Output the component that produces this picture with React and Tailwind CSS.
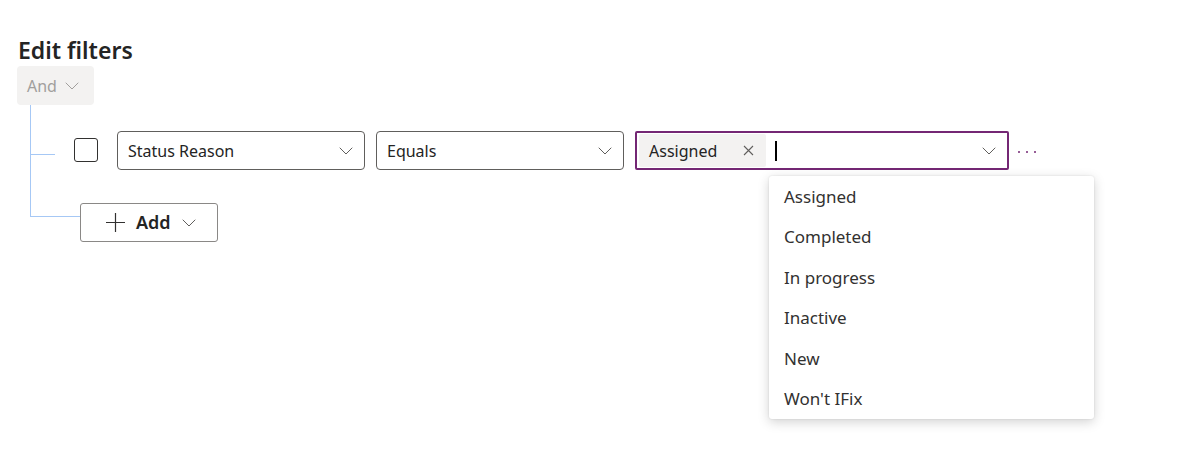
import React from "react";

const Chevron = ({ className = "" }) => (
  <svg width="14" height="8" viewBox="0 0 14 8" className={className}>
    <path d="M1 1l6 6 6-6" stroke="currentColor" strokeWidth="1" fill="none" strokeLinecap="round" strokeLinejoin="round" />
  </svg>
);

const Select = ({ label }) => (
  <div className="flex h-[39px] w-[248px] items-center justify-between rounded-[4px] border border-[#605e5c] bg-white pl-[10px] pr-[11px]">
    <span className="text-[16px] text-[#242424]">{label}</span>
    <Chevron className="text-[#605e5c]" />
  </div>
);

const options = ["Assigned", "Completed", "In progress", "Inactive", "New", "Won't IFix"];

export default function App() {
  return (
    <div
      className="min-h-screen bg-white pl-[17px] pt-[36px] text-[#242424]"
      style={{ fontFamily: '"Noto Sans", "Open Sans", sans-serif' }}
    >
      {/* Header */}
      <h1 className="ml-[1px] text-[23px] font-semibold leading-[28px] text-[#242424]">Edit filters</h1>

      <button className="mt-[2px] flex h-[39px] w-[77px] items-center gap-[8px] rounded-[4px] bg-[#f3f2f1] pl-[10px] text-[16px] text-[#a19f9d]">
        And
        <Chevron className="text-[#a19f9d]" />
      </button>

      {/* Tree */}
      <div className="ml-[13px]">
        <div className="border-l border-[#a6c8f5] pt-[26px] pb-[33px]">
          <div className="flex items-start">
            <div className="mt-[23px] h-px w-[24px] bg-[#a6c8f5]" />
            <div className="ml-[19px] mt-[7px] h-[24px] w-[24px] rounded-[3px] border border-[#323130] bg-white" />
            <div className="ml-[19px] flex items-center gap-[11px]">
              <Select label="Status Reason" />
              <Select label="Equals" />
              <div className="relative">
                <div className="flex h-[39px] w-[374px] items-center rounded-[2px] border-2 border-[#742774] bg-white pl-[2px] pr-[11px]">
                  <div className="flex h-[33px] w-[127px] items-center justify-between rounded-[2px] bg-[#f3f2f1] pl-[10px] pr-[12px]">
                    <span className="text-[16px] text-[#242424]">Assigned</span>
                    <svg width="11" height="11" viewBox="0 0 11 11" className="text-[#605e5c]">
                      <path d="M1 1l9 9M10 1l-9 9" stroke="currentColor" strokeWidth="1.1" />
                    </svg>
                  </div>
                  <div className="ml-[9px] h-[20px] w-[2px] bg-black" />
                  <div className="flex-1" />
                  <Chevron className="text-[#605e5c]" />
                </div>

                {/* Options menu */}
                <div className="absolute left-[134px] top-[45px] z-10 w-[325px] rounded-[3px] bg-white shadow-[0_3px_12px_rgba(0,0,0,0.18),0_0_2px_rgba(0,0,0,0.12)]">
                  {options.map((o) => (
                    <div key={o} className="flex h-[40.5px] items-center px-[15px] text-[17px] text-[#323130]">
                      {o}
                    </div>
                  ))}
                </div>
              </div>
              <div className="-ml-[2px] flex gap-[6px] pt-[2px]">
                <span className="h-[2px] w-[2px] rounded-full bg-[#742774]" />
                <span className="h-[2px] w-[2px] rounded-full bg-[#742774]" />
                <span className="h-[2px] w-[2px] rounded-full bg-[#742774]" />
              </div>
            </div>
          </div>
        </div>

        {/* Add row */}
        <div className="flex items-start">
          <div className="h-[14px] w-[50px] border-b border-l border-[#a6c8f5]" />
          <button className="flex h-[39px] w-[138px] items-center rounded-[3px] border border-[#8a8886] bg-white pl-[24px]">
            <svg width="21" height="21" viewBox="0 0 21 21" className="text-[#323130]">
              <path d="M10.5 1v19M1 10.5h19" stroke="currentColor" strokeWidth="1.2" />
            </svg>
            <span className="ml-[10px] text-[18px] font-semibold text-[#242424]">Add</span>
            <Chevron className="ml-[11px] text-[#605e5c]" />
          </button>
        </div>
      </div>
    </div>
  );
}
